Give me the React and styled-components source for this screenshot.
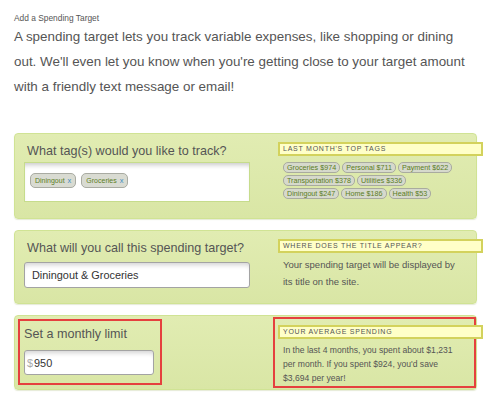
import React from "react";
import styled, { createGlobalStyle } from "styled-components";

const GlobalStyle = createGlobalStyle`
  body {
    margin: 0;
    background: #fff;
    color: #555;
    font-family: "Liberation Sans", Arial, sans-serif;
  }
`;

const Page = styled.div`
  width: 463px;
  padding: 13px 0 0 14px;
`;

const Kicker = styled.div`
  font-size: 8.4px;
  line-height: 11px;
  color: #555;
`;

const Intro = styled.p`
  width: 462px;
  margin: 0 0 34px;
  font-size: 13.4px;
  line-height: 25px;
  color: #555;
`;

const Card = styled.div`
  display: flex;
  justify-content: space-between;
  padding: ${(p) => p.$pad || "8px 0 16px 9px"};
  margin-bottom: 11px;
  border: 1px solid #d0e394;
  border-radius: 4px;
  background: linear-gradient(#e1ecb2, #d9e6a5);
  box-shadow: 0 1px 1px rgba(150, 170, 90, 0.25);
`;

const LeftCol = styled.div`
  width: 226px;
`;

const RightCol = styled.div`
  width: 198px;
`;

const Label = styled.div`
  padding-left: ${(p) => (p.$indent ? "3px" : "0")};
  font-size: 12.6px;
  line-height: 19px;
  color: #555;
  white-space: nowrap;
`;

const TagBox = styled.div`
  display: flex;
  gap: 5px;
  height: 40px;
  box-sizing: border-box;
  margin-top: 1px;
  padding: 10px 5px;
  background: #fff;
  border: 1px solid #c6dc8c;
  box-shadow: inset 0 5px 5px -3px rgba(0, 0, 0, 0.22);
`;

const Tag = styled.span`
  display: inline-flex;
  align-items: center;
  gap: 3px;
  height: 15px;
  box-sizing: border-box;
  padding: 0 4px;
  font-size: 7px;
  color: #5b7d1d;
  background: #d9dbd2;
  border: 1px solid #a9aba2;
  border-radius: 5px;
`;

const Remove = styled.span`
  color: #3d8cc2;
  font-size: 7.5px;
`;

const TextInput = styled.div`
  display: flex;
  align-items: center;
  width: ${(p) => p.$width || "226px"};
  height: ${(p) => p.$height || "26px"};
  box-sizing: border-box;
  margin-top: ${(p) => p.$top || "4px"};
  padding-left: ${(p) => p.$padLeft || "7px"};
  font-size: 10.9px;
  color: #333;
  background: #fff;
  border: 1px solid #a3a3a3;
  border-radius: 3px;
  box-shadow: inset 0 5px 5px -3px rgba(0, 0, 0, 0.18);
`;

const Currency = styled.span`
  margin-right: 1px;
  color: #aaa;
`;

const NoteTitle = styled.div`
  width: 205px;
  height: 14px;
  box-sizing: border-box;
  margin-left: ${(p) => p.$offset || "0"};
  padding-left: 3px;
  font-size: 7px;
  line-height: 10px;
  letter-spacing: 0.75px;
  text-transform: uppercase;
  color: #555;
  background: #ffffc8;
  border: 2px solid #d3d25c;
`;

const Pills = styled.div`
  display: flex;
  flex-wrap: wrap;
  gap: 2px;
  width: 175px;
  margin: 6px 0 0 5px;
`;

const Pill = styled.span`
  height: 11px;
  box-sizing: border-box;
  padding: 0 3px;
  font-size: 7.2px;
  line-height: 9px;
  color: #5b7d1d;
  background: #d6d9cc;
  border: 1px solid #a9ab9f;
  border-radius: 5px;
  white-space: nowrap;
`;

const NoteText = styled.p`
  width: ${(p) => p.$width || "180px"};
  margin: ${(p) => p.$margin || "3px 0 0 5px"};
  font-size: ${(p) => p.$size || "9.5px"};
  line-height: ${(p) => p.$lh || "17px"};
  color: #555;
`;

const Highlight = styled.div`
  box-sizing: border-box;
  border: 2px solid #e5403e;
`;

const LimitBox = styled(Highlight)`
  width: 144px;
  margin-top: 2px;
  align-self: flex-start;
  padding: 4px 6px 8px 4px;
`;

const AverageBox = styled(Highlight)`
  width: 203px;
  padding: 6px 0 1px;
`;

const topTags = [
  "Groceries $974",
  "Personal $711",
  "Payment $622",
  "Transportation $378",
  "Utilities $336",
  "Diningout $247",
  "Home $186",
  "Health $53",
];

export default function App() {
  return (
    <Page>
      <GlobalStyle />
      <Kicker>Add a Spending Target</Kicker>
      <Intro>
        A spending target lets you track variable expenses, like shopping or dining
        out. We'll even let you know when you're getting close to your target amount
        with a friendly text message or email!
      </Intro>

      <Card>
        <LeftCol>
          <Label $indent>What tag(s) would you like to track?</Label>
          <TagBox>
            <Tag>
              Diningout <Remove>x</Remove>
            </Tag>
            <Tag>
              Groceries <Remove>x</Remove>
            </Tag>
          </TagBox>
        </LeftCol>
        <RightCol>
          <NoteTitle>Last month's top tags</NoteTitle>
          <Pills>
            {topTags.map((t) => (
              <Pill key={t}>{t}</Pill>
            ))}
          </Pills>
        </RightCol>
      </Card>

      <Card $pad="8px 0 13px 9px">
        <LeftCol>
          <Label $indent>What will you call this spending target?</Label>
          <TextInput>Diningout &amp; Groceries</TextInput>
        </LeftCol>
        <RightCol>
          <NoteTitle>Where does the title appear?</NoteTitle>
          <NoteText>
            Your spending target will be displayed by its title on the site.
          </NoteText>
        </RightCol>
      </Card>

      <Card $pad="1px 0 1px 3px">
        <LimitBox>
          <Label>Set a monthly limit</Label>
          <TextInput $width="130px" $height="25px" $top="6px" $padLeft="2px">
            <Currency>$</Currency>950
          </TextInput>
        </LimitBox>
        <AverageBox>
          <NoteTitle $offset="3px">Your average spending</NoteTitle>
          <NoteText $size="8.6px" $lh="14px" $width="175px" $margin="4px 0 0 8px">
            In the last 4 months, you spent about $1,231 per month. If you spent
            $924, you'd save $3,694 per year!
          </NoteText>
        </AverageBox>
      </Card>
    </Page>
  );
}
